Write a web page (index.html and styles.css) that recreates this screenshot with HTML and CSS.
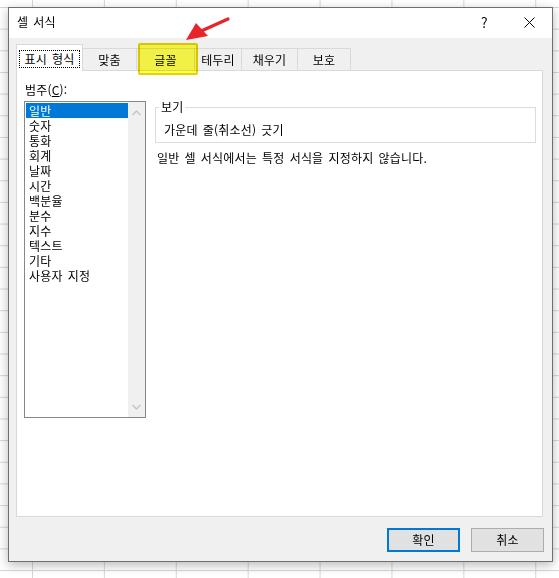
FILE: index.html
```html
<!DOCTYPE html>
<html lang="ko">
<head>
<meta charset="utf-8">
<title>셀 서식</title>
<link rel="stylesheet" href="styles.css">
</head>
<body>
<div class="dialog">
  <div class="titlebar">
    <span class="title">셀 서식</span>
    <span class="tb-btn help">?</span>
    <span class="tb-btn close">
      <svg width="11" height="11" viewBox="0 0 11 11"><path d="M0.5 0.5 L10.5 10.5 M10.5 0.5 L0.5 10.5" stroke="#000" stroke-width="1" fill="none"/></svg>
    </span>
  </div>
  <div class="content">
    <div class="tabs">
      <div class="tab selected t1"><span class="focus">표시 형식</span></div>
      <div class="tab t2">맞춤</div>
      <div class="tab t3">글꼴</div>
      <div class="tab t4">테두리</div>
      <div class="tab t5">채우기</div>
      <div class="tab t6">보호</div>
    </div>
    <div class="panel">
      <div class="left">
        <div class="label">범주(<u>C</u>):</div>
        <div class="listbox">
          <ul class="items">
            <li class="sel">일반</li>
            <li>숫자</li>
            <li>통화</li>
            <li>회계</li>
            <li>날짜</li>
            <li>시간</li>
            <li>백분율</li>
            <li>분수</li>
            <li>지수</li>
            <li>텍스트</li>
            <li>기타</li>
            <li>사용자 지정</li>
          </ul>
          <div class="scroll">
            <svg width="9" height="6" viewBox="0 0 9 6"><path d="M0.5 5 L4.5 1 L8.5 5" stroke="#c4c4c4" stroke-width="1.3" fill="none"/></svg>
            <svg width="9" height="6" viewBox="0 0 9 6"><path d="M0.5 1 L4.5 5 L8.5 1" stroke="#c4c4c4" stroke-width="1.3" fill="none"/></svg>
          </div>
        </div>
      </div>
      <div class="right">
        <fieldset class="sample">
          <legend>보기</legend>
          <div class="sample-text">가운데 줄(취소선) 긋기</div>
        </fieldset>
        <p class="desc">일반 셀 서식에서는 특정 서식을 지정하지 않습니다.</p>
      </div>
    </div>
    <div class="buttons">
      <button class="btn default">확인</button>
      <button class="btn">취소</button>
    </div>
  </div>
</div>
<div class="highlight"></div>
<svg class="arrow" width="559" height="80" viewBox="0 0 559 80">
  <path d="M228 19 L199 32" stroke="#e8242b" stroke-width="3.2" stroke-linecap="round" fill="none"/>
  <polygon points="186,40 196,23 208,36" fill="#e8242b"/>
</svg>
</body>
</html>
```

FILE: styles.css
```css
html, body {
  margin: 0;
  padding: 0;
}
body {
  width: 559px;
  height: 578px;
  overflow: hidden;
  position: relative;
  font-family: "Noto Sans CJK KR", "Noto Sans", sans-serif;
  font-size: 12px;
  word-spacing: 1.5px;
  letter-spacing: 0.2px;
  color: #000;
  background-color: #fff;
  background-image:
    linear-gradient(to right, #d6d6d6 1px, transparent 1px),
    linear-gradient(to bottom, #d6d6d6 1px, transparent 1px);
  background-size: 71.9px 21.67px;
  background-position: 32px 7px;
  padding-top: 7px;
  padding-left: 8px;
  box-sizing: border-box;
}

.dialog {
  width: 545px;
  height: 555px;
  box-sizing: border-box;
  border: 1px solid #6e6e6e;
  background: #f0f0f0;
  box-shadow: 0 3px 10px rgba(0, 0, 0, 0.28);
  display: flex;
  flex-direction: column;
}

.titlebar {
  height: 30px;
  background: #fff;
  display: flex;
  align-items: center;
  flex: none;
}
.title {
  padding-left: 8px;
  flex: 1;
  line-height: 16px;
  margin-top: -2px;
}
.tb-btn {
  width: 45px;
  height: 30px;
  display: flex;
  align-items: center;
  justify-content: center;
}
.help {
  font-size: 14px;
  margin-top: -2px;
}
.close svg {
  display: block;
  margin-top: -2px;
}

.content {
  flex: 1;
  padding: 6px 9px 0 7px;
  display: flex;
  flex-direction: column;
}

.tabs {
  height: 26px;
  display: flex;
  align-items: flex-end;
  flex: none;
}
.tab {
  box-sizing: border-box;
  height: 22px;
  border: 1px solid #d9d9d9;
  border-bottom: none;
  background: #f0f0f0;
  display: flex;
  align-items: center;
  justify-content: center;
  line-height: 16px;
  margin-left: -1px;
}
.tab.selected {
  height: 27px;
  margin-bottom: -1px;
  margin-left: 0;
  background: #fff;
  position: relative;
  z-index: 2;
  padding-top: 4px;
  align-items: flex-start;
}
.focus {
  display: inline-flex;
  align-items: center;
  height: 18px;
  box-sizing: border-box;
  padding: 0 4px;
  border: 1px dotted #000;
  margin-top: 1px;
}
.t1 { width: 67px; }
.t2 { width: 55px; }
.t3 { width: 59px; }
.t4 { width: 48px; }
.t5 { width: 57px; }
.t6 { width: 54px; }

.panel {
  box-sizing: border-box;
  height: 447px;
  border: 1px solid #d9d9d9;
  background: #fff;
  display: flex;
  padding: 11px 6px 0 7px;
  flex: none;
}

.left {
  width: 122px;
  flex: none;
}
.label {
  line-height: 16px;
  padding-left: 1px;
}
.listbox {
  margin-top: 3px;
  box-sizing: border-box;
  width: 122px;
  height: 317px;
  border: 1px solid #828790;
  display: flex;
  padding-left: 1px;
}
.items {
  list-style: none;
  margin: 1px 0 0 0;
  padding: 0;
  width: 102px;
}
.items li {
  height: 15px;
  line-height: 15px;
  padding-left: 3px;
}
.items li.sel {
  background: #0078d7;
  color: #fff;
}
.scroll {
  width: 17px;
  background: #f0f0f0;
  display: flex;
  flex-direction: column;
  justify-content: space-between;
  align-items: center;
  padding: 8px 0 7px 0;
  box-sizing: border-box;
}
.scroll svg {
  display: block;
}

.right {
  flex: 1;
  margin-left: 9px;
}
.sample {
  margin: 0;
  margin-top: 18px;
  border: 1px solid #dcdcdc;
  padding: 8px 8px 4px 8px;
}
.sample legend {
  padding: 0 2px;
  margin-left: -5px;
  line-height: 14px;
}
.sample-text {
  line-height: 16px;
}
.desc {
  margin: 7px 0 0 0;
  padding-left: 2px;
  line-height: 16px;
}

.buttons {
  display: flex;
  justify-content: flex-end;
  gap: 11px;
  margin-top: 11px;
  margin-right: -1px;
}
.btn {
  width: 73px;
  height: 24px;
  box-sizing: border-box;
  background: #e1e1e1;
  border: 1px solid #adadad;
  font-family: "Noto Sans CJK KR", "Noto Sans", sans-serif;
  font-size: 12px;
  letter-spacing: 0.2px;
  color: #000;
  padding: 0;
  line-height: 16px;
}
.btn.default {
  border: 2px solid #0078d7;
}

.highlight {
  position: absolute;
  left: 138px;
  top: 43px;
  width: 60px;
  height: 32px;
  box-sizing: border-box;
  background: #ffff4a;
  border: 2px solid #e6d200;
  border-radius: 2px;
  mix-blend-mode: multiply;
}
.arrow {
  position: absolute;
  left: 0;
  top: 0;
}
```
